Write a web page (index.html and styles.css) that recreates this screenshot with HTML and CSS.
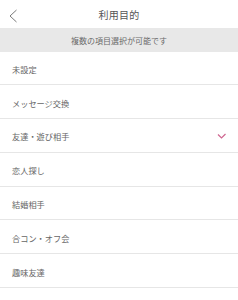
FILE: index.html
```html
<!DOCTYPE html>
<html lang="ja">
<head>
<meta charset="utf-8">
<link rel="stylesheet" href="styles.css">
</head>
<body>
<div class="screen">
  <header class="topbar">
    <span class="back">
      <svg width="12" height="16" viewBox="0 0 12 16"><polyline points="8.5,2 2,8 8.5,14" fill="none" stroke="#7a7a7a" stroke-width="1"/></svg>
    </span>
    <h1 class="title">利用目的</h1>
  </header>
  <div class="notice">複数の項目選択が可能です</div>
  <ul class="list">
    <li class="item">未設定</li>
    <li class="item">メッセージ交換</li>
    <li class="item selected">友達・遊び相手
      <svg class="check" width="10" height="8" viewBox="0 0 10 8"><polyline points="1,2.5 4.5,6 8.5,2" fill="none" stroke="#cf6690" stroke-width="1.2"/></svg>
    </li>
    <li class="item">恋人探し</li>
    <li class="item">結婚相手</li>
    <li class="item">合コン・オフ会</li>
    <li class="item">趣味友達</li>
  </ul>
</div>
</body>
</html>
```

FILE: styles.css
```css
html, body {
  margin: 0;
  padding: 0;
  background: #fff;
}
body {
  font-family: "Noto Sans CJK JP", "Noto Sans", sans-serif;
  color: #666;
}
.screen {
  width: 238px;
  height: 300px;
  overflow: hidden;
}
.topbar {
  height: 28px;
  display: flex;
  align-items: center;
  justify-content: center;
  position: relative;
}
.back {
  position: absolute;
  left: 8px;
  top: 8px;
  display: flex;
}
.title {
  margin: 0;
  font-size: 10px;
  font-weight: 400;
  color: #555;
  letter-spacing: 0.2px;
  line-height: 1;
  padding-top: 2px;
}
.notice {
  height: 24px;
  background: #e8e8e8;
  display: flex;
  align-items: center;
  justify-content: center;
  font-size: 8px;
  color: #6a6a6a;
  line-height: 1;
  padding-top: 1px;
  box-sizing: border-box;
}
.list {
  list-style: none;
  margin: 0;
  padding: 0;
}
.item {
  border-bottom: 1px solid #e6e6e6;
  display: flex;
  align-items: center;
  justify-content: space-between;
  padding: 2px 12px 0 12px;
  box-sizing: content-box;
  font-size: 8.2px;
  line-height: 1;
  color: #666;
}
.item:first-child {
  height: 30.3px;
}
.item:not(:first-child) {
  height: 30.8px;
}
.check {
  margin-right: -1px;
}
```
